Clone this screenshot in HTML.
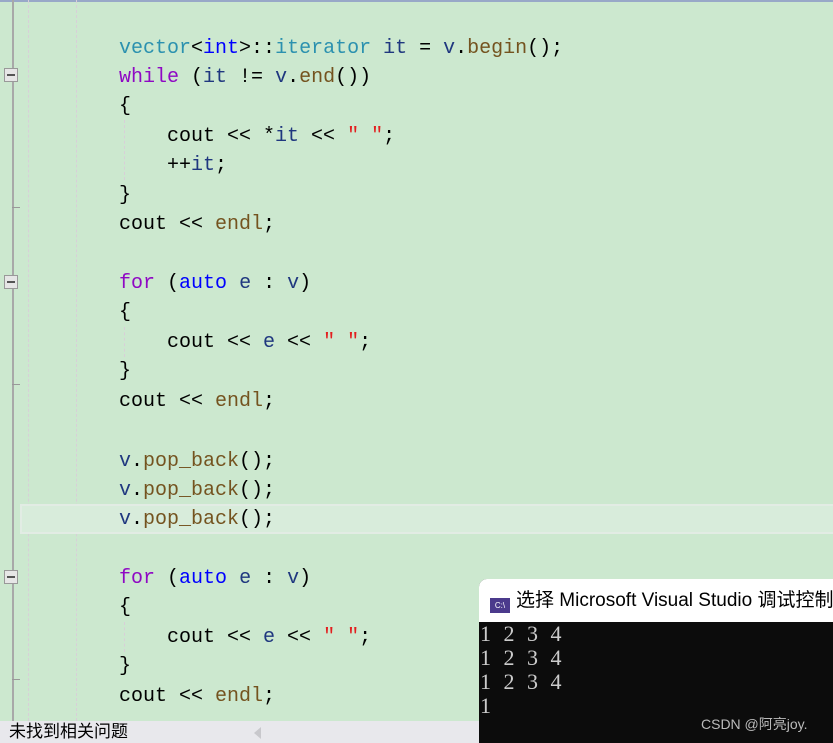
<!DOCTYPE html><html><head><style>
body{margin:0;width:833px;height:743px;overflow:hidden;background:#cce8cf;position:relative;font-family:"Liberation Mono",monospace}
.l{position:absolute;left:119px;font-size:20px;white-space:pre;line-height:20px;color:#000}
.k{color:#8f08c4}.t{color:#2b91af}.b{color:#0000ff}.f{color:#74531f}.s{color:#e21f1f}.v{color:#1f377f}
.fold{position:absolute;left:4px;width:12px;height:12px;border:1px solid #999;background:#e6e6e6}
.fold:after{content:"";position:absolute;left:2px;top:5px;width:8px;height:2px;background:#555}
.c{font-family:'Liberation Serif',serif;font-size:22px;line-height:24px;color:#ccc;padding-left:1px;white-space:pre;word-spacing:7px}
</style></head><body>
<div style="position:absolute;top:0;left:0;width:833px;height:2px;background:#98a8c8"></div>
<div style="position:absolute;left:12px;top:0;width:2px;height:721px;background:#a8a8a8"></div>
<div style="position:absolute;left:28px;top:0;height:721px;border-left:1px dashed #d8cfd8"></div>
<div style="position:absolute;left:76px;top:0;height:721px;border-left:1px dashed #d8cfd8"></div>
<div style="position:absolute;left:124px;top:120px;height:60px;border-left:1px dashed #d8cfd8"></div>
<div style="position:absolute;left:124px;top:327px;height:30px;border-left:1px dashed #d8cfd8"></div>
<div style="position:absolute;left:124px;top:622px;height:30px;border-left:1px dashed #d8cfd8"></div>
<div style="position:absolute;left:12px;top:207px;width:8px;height:1px;background:#999"></div>
<div style="position:absolute;left:12px;top:384px;width:8px;height:1px;background:#999"></div>
<div style="position:absolute;left:12px;top:679px;width:8px;height:1px;background:#999"></div>
<div class="fold" style="top:68px"></div><div class="fold" style="top:275px"></div><div class="fold" style="top:570px"></div>
<div style="position:absolute;left:20px;top:504px;width:813px;height:26px;border:2px solid #e2ece4;background:#d8ecdb"></div>
<div class="l" style="top:39px"><span class="t">vector</span>&lt;<span class="b">int</span>&gt;::<span class="t">iterator</span> <span class="v">it</span> = <span class="v">v</span>.<span class="f">begin</span>();</div>
<div class="l" style="top:68px"><span class="k">while</span> (<span class="v">it</span> != <span class="v">v</span>.<span class="f">end</span>())</div>
<div class="l" style="top:97px">{</div>
<div class="l" style="top:127px">    cout &lt;&lt; *<span class="v">it</span> &lt;&lt; <span class="s">" "</span>;</div>
<div class="l" style="top:156px">    ++<span class="v">it</span>;</div>
<div class="l" style="top:186px">}</div>
<div class="l" style="top:215px">cout &lt;&lt; <span class="f">endl</span>;</div>
<div class="l" style="top:274px"><span class="k">for</span> (<span class="b">auto</span> <span class="v">e</span> : <span class="v">v</span>)</div>
<div class="l" style="top:303px">{</div>
<div class="l" style="top:333px">    cout &lt;&lt; <span class="v">e</span> &lt;&lt; <span class="s">" "</span>;</div>
<div class="l" style="top:362px">}</div>
<div class="l" style="top:392px">cout &lt;&lt; <span class="f">endl</span>;</div>
<div class="l" style="top:452px"><span class="v">v</span>.<span class="f">pop_back</span>();</div>
<div class="l" style="top:481px"><span class="v">v</span>.<span class="f">pop_back</span>();</div>
<div class="l" style="top:510px"><span class="v">v</span>.<span class="f">pop_back</span>();</div>
<div class="l" style="top:569px"><span class="k">for</span> (<span class="b">auto</span> <span class="v">e</span> : <span class="v">v</span>)</div>
<div class="l" style="top:598px">{</div>
<div class="l" style="top:628px">    cout &lt;&lt; <span class="v">e</span> &lt;&lt; <span class="s">" "</span>;</div>
<div class="l" style="top:657px">}</div>
<div class="l" style="top:687px">cout &lt;&lt; <span class="f">endl</span>;</div>
<div style="position:absolute;left:0;top:721px;width:479px;height:22px;background:#e8e8ec;font-family:'Liberation Sans','Noto Sans CJK SC',sans-serif;font-size:17px;line-height:22px;color:#000;padding-left:9px;box-sizing:border-box">未找到相关问题</div>
<div style="position:absolute;left:254px;top:727px;width:0;height:0;border:6px solid transparent;border-right:7px solid #c8c8cc;border-left:0"></div>
<div style="position:absolute;left:479px;top:579px;width:354px;height:164px;background:#0c0c0c;border-top-left-radius:8px;overflow:hidden">
<div style="height:43px;background:#fff;font-family:'Liberation Sans','Noto Sans CJK SC',sans-serif;font-size:19px;line-height:43px;white-space:nowrap;color:#000;padding-left:11px">
<span style="display:inline-block;width:20px;height:15px;background:#4b3a8c;vertical-align:-2px;margin-right:6px;color:#fff;font-size:8px;line-height:15px;text-align:center">C:\</span>选择 Microsoft Visual Studio 调试控制台</div>
<div class="c">1 2 3 4
1 2 3 4
1 2 3 4
1</div>
<div style="position:absolute;left:222px;top:135px;font-family:'Liberation Sans','Noto Sans CJK SC',sans-serif;font-size:14px;color:#bbb">CSDN @阿亮joy.</div>
</div>
</body></html>
